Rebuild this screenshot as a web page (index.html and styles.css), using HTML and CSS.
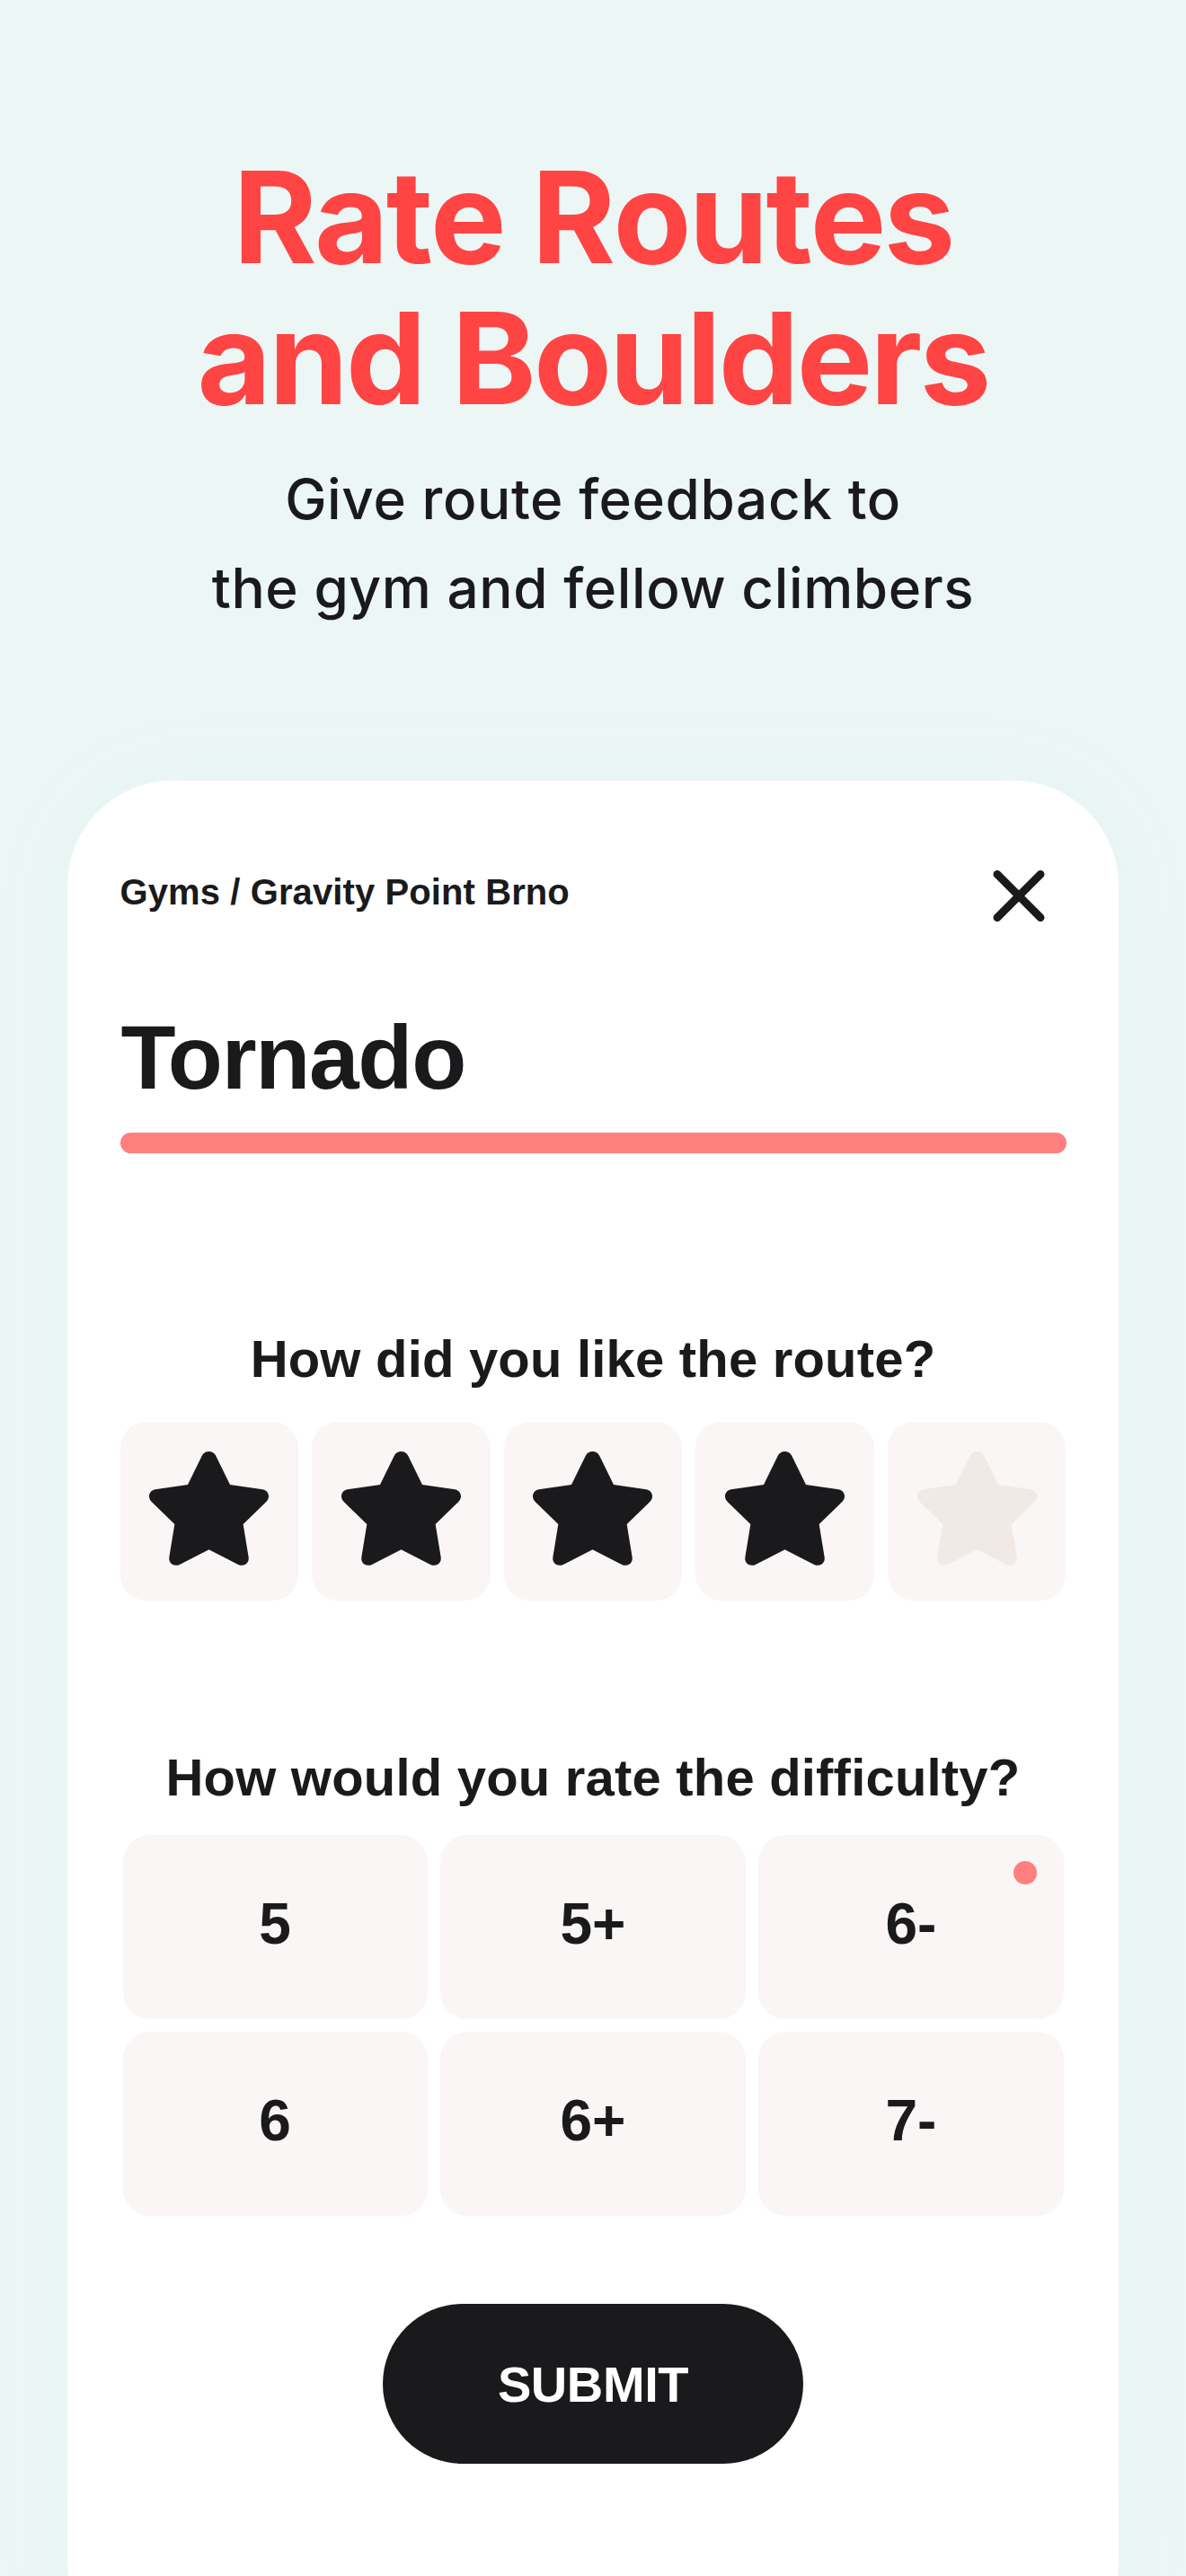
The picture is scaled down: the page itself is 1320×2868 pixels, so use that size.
FILE: index.html
```html
<!DOCTYPE html>
<html lang="en">

<head>
    <meta charset="UTF-8">
    <meta name="viewport" content="width=device-width, initial-scale=1.0">
    <title>Rate Routes and Boulders</title>
    <link rel="stylesheet" href="styles.css">
</head>

<body>
    <!-- star shape used by the rating buttons -->
    <svg class="defs" width="0" height="0">
        <symbol id="star" viewBox="0 0 399 381">
            <path d="M176 15C185 -5 214 -5 223 15L270 111L374 126C398 127 407 152 391 168L314 243L332 353C335 375 315 387 296 377L199.500 328L103 377C84 387 64 375 67 353L85 243L8 168C-8 152 1 127 25 126L129 111Z" />
        </symbol>
    </svg>

    <div class="hero">
        <h1>Rate Routes<br>and Boulders</h1>
        <p>Give route feedback to<br>the gym and fellow climbers</p>
    </div>

    <div class="card">
        <div class="top">
            <span class="path">Gyms / Gravity Point Brno</span>
            <svg class="close" viewBox="0 0 58 58">
                <path d="M4.500 4.500L53.500 53.500M53.500 4.500L4.500 53.500" />
            </svg>
        </div>
        <h2>Tornado</h2>
        <div class="line"></div>

        <h3 class="like">How did you like the route?</h3>
        <div class="stars">
            <div class="star"><svg><use href="#star" /></svg></div>
            <div class="star"><svg><use href="#star" /></svg></div>
            <div class="star"><svg><use href="#star" /></svg></div>
            <div class="star"><svg><use href="#star" /></svg></div>
            <div class="star off"><svg><use href="#star" /></svg></div>
        </div>

        <h3 class="difficulty">How would you rate the difficulty?</h3>
        <div class="grades">
            <div class="grade">5</div>
            <div class="grade">5+</div>
            <div class="grade current">6-</div>
            <div class="grade">6</div>
            <div class="grade">6+</div>
            <div class="grade">7-</div>
        </div>

        <button class="submit">SUBMIT</button>
    </div>
</body>

</html>
```

FILE: styles.css
```css
* {
    padding: 0;
    margin: 0;
    box-sizing: border-box;
}

body {
    height: 2868px;
    overflow: hidden;
    background-color: #ecf6f5;
    color: #1a1a1c;
    font-family: "Liberation Sans", Arial, sans-serif;
}

.defs {
    display: block;
}

.hero {
    height: 869px;
    padding-top: 163.4px;
    text-align: center;
    font-family: Inter, sans-serif;
}

.hero h1 {
    color: #ff4444;
    font-size: 142px;
    font-weight: 700;
    line-height: 156.2px;
    letter-spacing: -2.7px;
    font-kerning: none;
}

.hero p {
    margin-top: 30px;
    font-size: 62px;
    font-weight: 500;
    line-height: 99.3px;
    letter-spacing: 0.6px;
}

.card {
    width: 1170px;
    height: 2100px;
    margin: 0 auto;
    padding: 100px 58.5px 0;
    background-color: white;
    border-radius: 117px;
    box-shadow: 0 0 110px rgba(100, 240, 190, 0.045);
}

.top {
    display: flex;
    justify-content: space-between;
    align-items: flex-start;
    height: 57px;
    padding-right: 23.5px;
}

.path {
    font-size: 40px;
    font-weight: 700;
    line-height: 49px;
    letter-spacing: 0.1px;
}

.close {
    width: 58px;
    height: 57px;
    fill: none;
    stroke: #1a1a1c;
    stroke-width: 9;
    stroke-linecap: round;
}

h2 {
    margin-top: 96.4px;
    padding-left: 1px;
    font-size: 100px;
    line-height: 110px;
    letter-spacing: -1.3px;
}

.line {
    height: 23.4px;
    margin-top: 28.2px;
    border-radius: 12px;
    background-color: #ff7f7f;
}

h3 {
    font-size: 58px;
    line-height: 66px;
    letter-spacing: 0.2px;
    text-align: center;
}

.like {
    margin-top: 196.4px;
}

.stars {
    display: flex;
    justify-content: space-between;
    margin-top: 37px;
}

.star {
    display: flex;
    justify-content: center;
    width: 198.8px;
    height: 199px;
    padding-top: 33px;
    border-radius: 29px;
    background-color: #faf6f5;
}

.star svg {
    width: 133px;
    height: 127px;
    fill: #1a1a1c;
}

.off svg {
    fill: #f0e9e5;
}

.difficulty {
    margin-top: 163.4px;
}

.grades {
    display: grid;
    grid-template-columns: repeat(3, 1fr);
    grid-auto-rows: 205px;
    gap: 14.5px;
    margin: 31px 3px 0;
}

.grade {
    position: relative;
    padding-top: 62px;
    border-radius: 30px;
    background-color: #faf6f5;
    font-size: 64px;
    font-weight: 700;
    line-height: 74px;
    text-align: center;
}

.current::after {
    content: "";
    position: absolute;
    top: 29px;
    right: 30px;
    width: 26px;
    height: 26px;
    border-radius: 50%;
    background-color: #ff7f7f;
}

.submit {
    display: block;
    width: 468px;
    height: 178.5px;
    margin: 97.5px auto 0;
    border: none;
    border-radius: 90px;
    background-color: #1a1a1c;
    color: white;
    font-family: inherit;
    font-size: 56px;
    font-weight: 700;
    letter-spacing: -0.4px;
}
```
